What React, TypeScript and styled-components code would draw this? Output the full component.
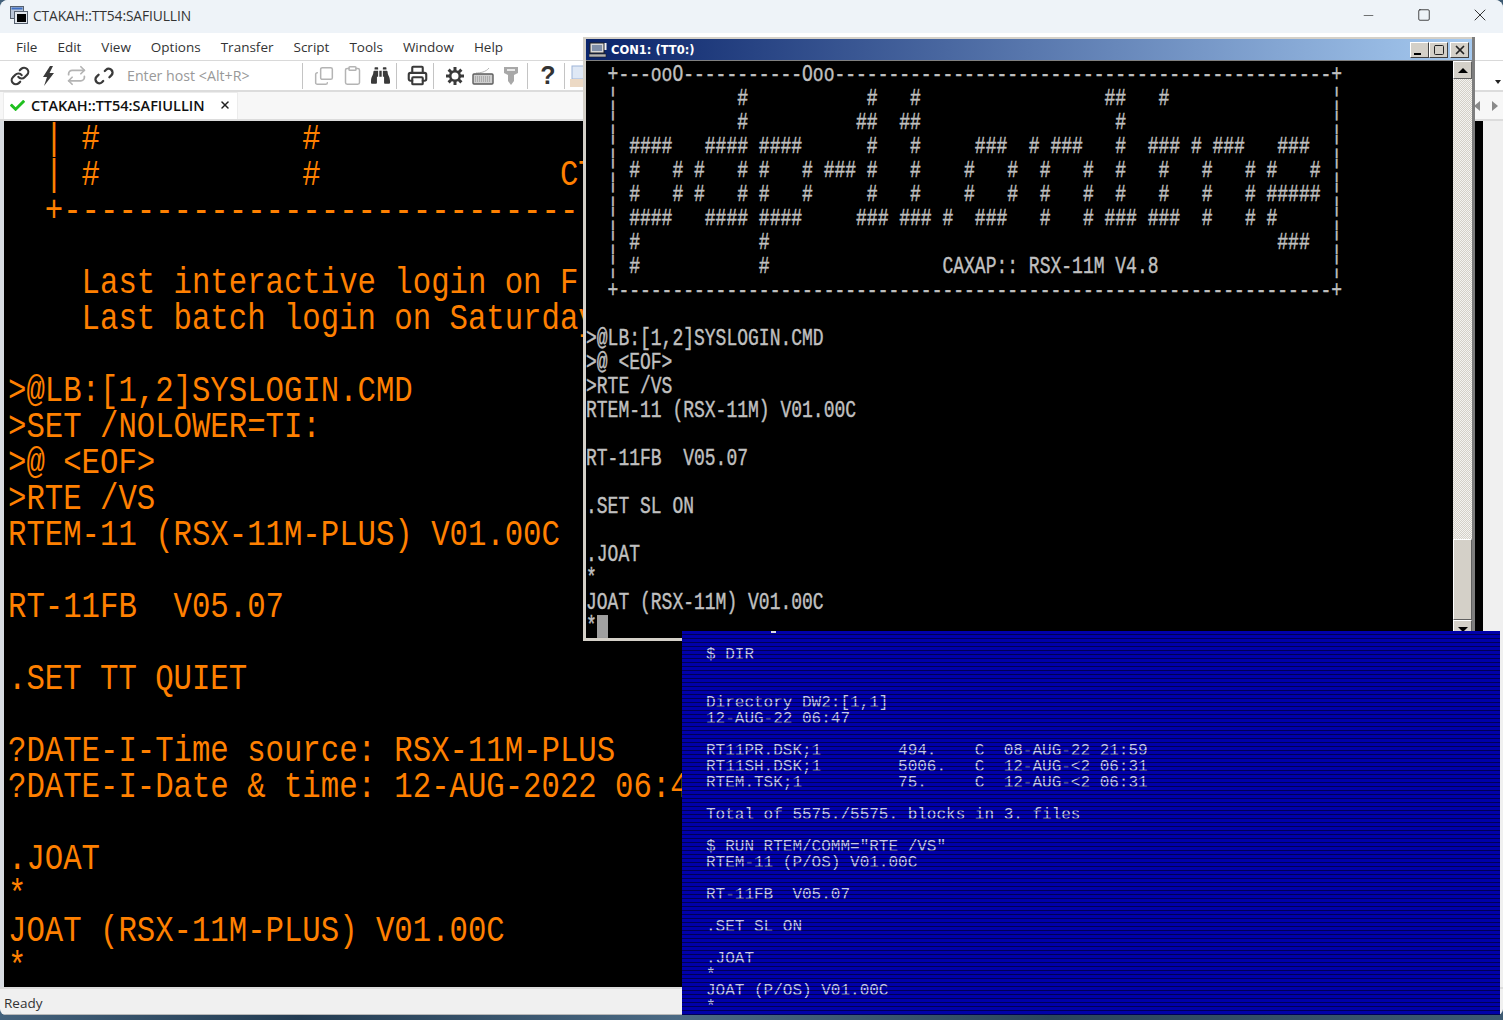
import React from 'react';
import styled, { createGlobalStyle } from 'styled-components';
import { Clipboard, Copy, Link, Minus, Printer, Repeat, Square, X } from 'lucide-react';
import { FaBinoculars, FaCheck } from 'react-icons/fa';

const MENU_ITEMS = ['File', 'Edit', 'View', 'Options', 'Transfer', 'Script', 'Tools', 'Window', 'Help'];

const MAIN_LINES = [
  '  | #           #',
  '  | #           #             CT',
  '  +' + '-'.repeat(28),
  '',
  '    Last interactive login on F',
  '    Last batch login on Saturday',
  '',
  '>@LB:[1,2]SYSLOGIN.CMD',
  '>SET /NOLOWER=TI:',
  '>@ <EOF>',
  '>RTE /VS',
  'RTEM-11 (RSX-11M-PLUS) V01.00C',
  '',
  'RT-11FB  V05.07',
  '',
  '.SET TT QUIET',
  '',
  '?DATE-I-Time source: RSX-11M-PLUS',
  '?DATE-I-Date & time: 12-AUG-2022 06:4',
  '',
  '.JOAT',
  '*',
  'JOAT (RSX-11M-PLUS) V01.00C',
  '*',
];

// banner is easier to keep straight by column than by counting spaces
const row = (...cells: [number, string][]) => {
  let line = '';
  for (const [col, text] of cells) line = line.padEnd(col) + text;
  return line;
};
const bar = (...cells: [number, string][]) => row([2, '¦'], ...cells, [69, '¦']);
const marks = (...cols: number[]) => cols.map((col): [number, string] => [col, '#']);

const CON_LINES = [
  row([2, '+---ooO'], [9, '-'.repeat(11)], [20, 'Ooo'], [23, '-'.repeat(46)], [69, '+']),
  bar(...marks(14, 26, 30, 48, 49, 53)),
  bar(...marks(14, 25, 26, 29, 30, 49)),
  bar([4, '####'], [11, '####'], [16, '####'], [26, '#'], [30, '#'], [36, '###'], [41, '#'], [43, '###'], [49, '#'], [52, '###'], [56, '#'], [58, '###'], [64, '###']),
  bar(...marks(4, 8, 10, 14, 16, 20), [22, '###'], ...marks(26, 30, 35, 39, 42, 46, 49, 53, 57, 61, 63, 67)),
  bar(...marks(4, 8, 10, 14, 16, 20, 26, 30, 35, 39, 42, 46, 49, 53, 57, 61), [63, '#####']),
  bar([4, '####'], [11, '####'], [16, '####'], [25, '###'], [29, '###'], [33, '#'], [36, '###'], [42, '#'], [46, '#'], [48, '###'], [52, '###'], [57, '#'], [61, '#'], [63, '#']),
  bar([4, '#'], [16, '#'], [64, '###']),
  bar([4, '#'], [16, '#'], [33, 'CAXAP:: RSX-11M V4.8']),
  row([2, '+' + '-'.repeat(66) + '+']),
  '',
  '>@LB:[1,2]SYSLOGIN.CMD',
  '>@ <EOF>',
  '>RTE /VS',
  'RTEM-11 (RSX-11M) V01.00C',
  '',
  'RT-11FB  V05.07',
  '',
  '.SET SL ON',
  '',
  '.JOAT',
  '*',
  'JOAT (RSX-11M) V01.00C',
];

const VT_LINES = [
  '$ DIR',
  '',
  '',
  'Directory DW2:[1,1]',
  '12-AUG-22 06:47',
  '',
  'RT11PR.DSK;1        494.    C  08-AUG-22 21:59',
  'RT11SH.DSK;1        5006.   C  12-AUG-<2 06:31',
  'RTEM.TSK;1          75.     C  12-AUG-<2 06:31',
  '',
  'Total of 5575./5575. blocks in 3. files',
  '',
  '$ RUN RTEM/COMM="RTE /VS"',
  'RTEM-11 (P/OS) V01.00C',
  '',
  'RT-11FB  V05.07',
  '',
  '.SET SL ON',
  '',
  '.JOAT',
  '*',
  'JOAT (P/OS) V01.00C',
  '*',
];

function App() {
  return (
    <Desktop>
      <GlobalStyle />
      <MainWindow>
        <TitleBar>
          <AppIcon viewBox="0 0 18 18">
            <rect x="0.5" y="0.5" width="13" height="12" fill="#b9c4d6" stroke="#56606e" />
            <rect x="1.5" y="1.5" width="11" height="2" fill="#3f6fc4" />
            <rect x="4.5" y="5.5" width="13" height="12" fill="#e2e6ec" stroke="#56606e" />
            <rect x="7" y="8" width="9" height="8" fill="#000" />
          </AppIcon>
          <TitleText>CTAKAH::TT54:SAFIULLIN</TitleText>
          <WindowControls>
            <WindowControl><Minus size={15} strokeWidth={1} /></WindowControl>
            <WindowControl><Square size={14} strokeWidth={1.4} /></WindowControl>
            <WindowControl><X size={20} strokeWidth={1.1} /></WindowControl>
          </WindowControls>
        </TitleBar>
        <MenuBar>
          {MENU_ITEMS.map((item) => (
            <MenuItem key={item}>{item}</MenuItem>
          ))}
        </MenuBar>
        <Toolbar>
          <ToolButton><Link size={20} strokeWidth={2.6} /></ToolButton>
          <ToolButton>
            <svg width="18" height="22" viewBox="0 0 18 22">
              <path d="M11 1 L4 12 H8 L5 21 L15 8 H10.5 L14 1 Z" fill="#3a3a3a" />
            </svg>
          </ToolButton>
          <ToolButton $muted><Repeat size={21} strokeWidth={2} /></ToolButton>
          <ToolButton>
            <svg width="20" height="20" viewBox="0 0 24 24" fill="none" stroke="currentColor" strokeWidth="2.8" strokeLinecap="round">
              <path d="M13 6 l1.5-1.5 a4.6 4.6 0 0 1 6.5 6.5 l-2.5 2.5" />
              <path d="M11 18 l-1.5 1.5 a4.6 4.6 0 0 1 -6.5 -6.5 l2.5 -2.5" />
            </svg>
          </ToolButton>
          <HostField>Enter host &lt;Alt+R&gt;</HostField>
          <ToolSeparator />
          <ToolGroup $lead={7}>
            <ToolButton $muted><FlippedCopy size={20} strokeWidth={1.8} /></ToolButton>
            <ToolButton $muted><Clipboard size={21} strokeWidth={1.7} /></ToolButton>
            <ToolButton><FaBinoculars size={19} /></ToolButton>
          </ToolGroup>
          <ToolSeparator />
          <ToolGroup $lead={6}>
            <ToolButton><Printer size={21} strokeWidth={2.4} /></ToolButton>
          </ToolGroup>
          <ToolSeparator />
          <ToolGroup $lead={7}>
            <ToolButton>
              <svg width="20" height="20" viewBox="0 0 20 20" fill="none" stroke="#3a3a3a">
                <circle cx="10" cy="10" r="4.8" strokeWidth="2.6" />
                <path d="M10 1 V5 M10 15 V19 M1 10 H5 M15 10 H19 M3.6 3.6 L6.5 6.5 M13.5 13.5 L16.4 16.4 M16.4 3.6 L13.5 6.5 M6.5 13.5 L3.6 16.4" strokeWidth="3" />
              </svg>
            </ToolButton>
            <ToolButton>
              <svg width="22" height="18" viewBox="0 0 22 18">
                <path d="M4 6 C8 6 14 5 17 1" fill="none" stroke="#b5b5b5" />
                <rect x="1" y="7" width="20" height="10" rx="1" fill="#cfcfcf" stroke="#5c5c5c" strokeWidth="1.4" />
                <path d="M3 10 H19 M3 12 H19 M3 14 H19" stroke="#8a8a8a" strokeDasharray="1 1" />
              </svg>
            </ToolButton>
            <ToolButton>
              <svg width="16" height="20" viewBox="0 0 16 20">
                <path d="M1 1 H15 V7 L11 9 V15 L8 19 L5 15 V9 L1 7 Z" fill="#a8a8a8" />
                <rect x="4" y="3" width="8" height="2" fill="#e8e8e8" />
              </svg>
            </ToolButton>
          </ToolGroup>
          <ToolSeparator />
          <ToolGroup $lead={6}>
            <HelpMark>?</HelpMark>
          </ToolGroup>
          <ToolSeparator />
          <ToolButton>
            <svg width="18" height="22" viewBox="0 0 18 22">
              <rect x="2" y="1" width="12" height="13" fill="#dfe8f5" stroke="#9db4d8" />
              <rect x="0" y="14" width="18" height="8" fill="#ecd9c4" />
            </svg>
          </ToolButton>
          <ToolbarCaret />
        </Toolbar>
        <TabBar>
          <ActiveTab>
            <FaCheck size={15} color="#1fc01f" />
            <TabLabel>CTAKAH::TT54:SAFIULLIN</TabLabel>
            <X size={12} strokeWidth={3} color="#222" />
          </ActiveTab>
          <TabArrows>
            <TabArrow $left />
            <TabArrow />
          </TabArrows>
        </TabBar>
        <SessionArea>
          <SessionScreen>
            {MAIN_LINES.map((line, i) => (
              <SessionLine key={i}>{line || ' '}</SessionLine>
            ))}
          </SessionScreen>
          <SessionScroll />
        </SessionArea>
        <StatusBar>Ready</StatusBar>
      </MainWindow>

      <ConWindow>
        <ConTitleBar>
          <svg width="18" height="16" viewBox="0 0 18 16">
            <rect x="1" y="1" width="14" height="10" fill="#d8d8d8" stroke="#202020" />
            <rect x="3" y="3" width="10" height="6" fill="#7f8fa8" />
            <rect x="0" y="12" width="17" height="3" fill="#b4b4b4" stroke="#202020" strokeWidth="0.6" />
            <rect x="15.5" y="1" width="2" height="7" fill="#f4f4f4" />
          </svg>
          <ConTitle>CON1: (TT0:)</ConTitle>
          <ConControls>
            <BevelButton><MinGlyph /></BevelButton>
            <BevelButton><Square size={12} strokeWidth={2} /></BevelButton>
            <BevelButton $spaced><X size={14} strokeWidth={3} /></BevelButton>
          </ConControls>
        </ConTitleBar>
        <ConBody>
          <ConScreen>
            {CON_LINES.map((line, i) => (
              <ConLine key={i}>{line || ' '}</ConLine>
            ))}
            <ConLine>*<ConCursor /></ConLine>
          </ConScreen>
          <ConScroll>
            <ScrollButton><ScrollArrow /></ScrollButton>
            <ScrollTrack>
              <ScrollThumb />
            </ScrollTrack>
            <ScrollButton><ScrollArrow $down /></ScrollButton>
          </ConScroll>
        </ConBody>
      </ConWindow>

      <VtWindow>
        <VtSpeck />
        {VT_LINES.map((line, i) => (
          <div key={i}>{line || ' '}</div>
        ))}
      </VtWindow>
    </Desktop>
  );
}

const GlobalStyle = createGlobalStyle`
  html, body {
    margin: 0;
    padding: 0;
    background: #2c475e;
  }
`;

const Desktop = styled.div`
  position: relative;
  width: 1503px;
  height: 1020px;
  overflow: hidden;
  background: linear-gradient(90deg, #44627c, #233c52 20%, #4b6a84 45%, #2b465c 70%, #3d5a72);
`;

const MainWindow = styled.div`
  display: flex;
  flex-direction: column;
  height: 1015px;
  background: #f0f0f0;
  border-radius: 8px 8px 6px 6px;
  overflow: hidden;
  font-family: 'Open Sans', 'Liberation Sans', sans-serif;
  color: #1b1b1b;
`;

const TitleBar = styled.div`
  display: flex;
  align-items: center;
  height: 33px;
  flex: none;
  box-sizing: border-box;
  padding: 0 0 3px 10px;
  background: #eef3f8;
`;

const AppIcon = styled.svg`
  width: 18px;
  height: 18px;
  margin-right: 5px;
`;

const TitleText = styled.span`
  font-size: 13.8px;
  letter-spacing: -0.1px;
  color: #333;
`;

const WindowControls = styled.div`
  display: flex;
  margin: 0 -5px 0 auto;
`;

const WindowControl = styled.div`
  display: flex;
  align-items: center;
  justify-content: center;
  width: 56px;
  height: 30px;
  color: #222;
`;

const MenuBar = styled.div`
  display: flex;
  align-items: center;
  gap: 20px;
  flex: none;
  height: 27px;
  padding-left: 16px;
  background: #fff;
  border-bottom: 1px solid #d9d9d9;
  font-size: 13.5px;
  color: #333;
`;

const MenuItem = styled.span``;

const Toolbar = styled.div`
  display: flex;
  align-items: center;
  flex: none;
  height: 29px;
  padding-left: 6px;
  background: #fff;
  border-bottom: 2px solid #dcdcdc;
`;

const ToolButton = styled.div<{ $muted?: boolean }>`
  display: flex;
  align-items: center;
  justify-content: center;
  width: 28px;
  height: 28px;
  flex: none;
  color: ${({ $muted }) => ($muted ? '#b4b4b4' : '#3a3a3a')};
`;

const FlippedCopy = styled(Copy)`
  transform: scaleY(-1);
`;

const HostField = styled.div`
  width: 184px;
  flex: none;
  padding-left: 9px;
  box-sizing: border-box;
  font-size: 14.2px;
  color: #999;
`;

const ToolSeparator = styled.div`
  width: 1px;
  height: 26px;
  flex: none;
  background: #c4c4c4;
`;

const ToolGroup = styled.div<{ $lead: number }>`
  display: flex;
  align-items: center;
  flex: none;
  padding: 0 2px 0 ${({ $lead }) => $lead}px;
`;

const HelpMark = styled.div`
  width: 28px;
  text-align: center;
  font-family: 'Liberation Sans', sans-serif;
  font-size: 25px;
  font-weight: 700;
  color: #333;
`;

const ToolbarCaret = styled.div`
  align-self: flex-end;
  margin: 0 2px 6px auto;
  border-left: 3px solid transparent;
  border-right: 3px solid transparent;
  border-top: 4px solid #222;
`;

const TabBar = styled.div`
  display: flex;
  align-items: flex-end;
  justify-content: space-between;
  flex: none;
  height: 27px;
  padding-left: 3px;
  background: #f7f7f7;
  border-bottom: 2px solid #dcdcdc;
`;

const ActiveTab = styled.div`
  display: flex;
  align-items: center;
  width: 235px;
  height: 27px;
  box-sizing: border-box;
  padding: 0 0 2px 6px;
  background: #fff;
  border: 1px solid #ececec;
  border-bottom: none;
`;

const TabLabel = styled.span`
  width: 188px;
  margin-left: 6px;
  font-size: 14.5px;
  font-weight: 600;
  color: #111;
`;

const TabArrows = styled.div`
  display: flex;
  align-items: center;
  gap: 12px;
  height: 27px;
  padding-right: 5px;
`;

const TabArrow = styled.div<{ $left?: boolean }>`
  width: 0;
  height: 0;
  border-top: 5px solid transparent;
  border-bottom: 5px solid transparent;
  border-left: ${({ $left }) => ($left ? 'none' : '6px solid #8a8a8a')};
  border-right: ${({ $left }) => ($left ? '6px solid #8a8a8a' : 'none')};
`;

const SessionArea = styled.div`
  display: flex;
  flex: 1;
  min-height: 0;
  padding-left: 4px;
  background: #d9dde2;
  border-bottom: 2px solid #dcdcdc;
`;

const SessionScreen = styled.div`
  flex: 1;
  min-width: 0;
  padding: 3px 0 0 4px;
  overflow: hidden;
  background: #000;
  font-family: 'Liberation Mono', monospace;
  font-size: 30.67px;
  color: #ff8000;
  white-space: pre;
`;

/* the reference font is a tall narrow terminal face, stretch the mono to it */
const SessionLine = styled.div`
  height: 29px;
  margin-bottom: 7px;
  line-height: 29px;
  transform: scaleY(1.2);
`;

const SessionScroll = styled.div`
  width: 20px;
  flex: none;
  background: #f0f0f0;
`;

const StatusBar = styled.div`
  display: flex;
  align-items: center;
  flex: none;
  height: 26px;
  box-sizing: border-box;
  padding: 3px 0 0 4px;
  border-bottom: 1px solid #b8b8b8;
  font-size: 13.5px;
  color: #333;
`;

const ConWindow = styled.div`
  position: absolute;
  left: 583px;
  top: 37px;
  display: flex;
  flex-direction: column;
  width: 892px;
  height: 604px;
  box-sizing: border-box;
  padding-top: 2px;
  background: #d4d0c8;
  border-left: 3px solid #d4d0c8;
  border-right: 3px solid #7e7e7e;
  border-bottom: 3px solid #d4d0c8;
`;

const ConTitleBar = styled.div`
  display: flex;
  align-items: center;
  flex: none;
  height: 22px;
  padding: 0 3px;
  background: linear-gradient(90deg, #0a246a, #a6caf0);
  border-bottom: 1px solid #808080;
  box-sizing: border-box;
`;

const ConTitle = styled.span`
  margin-left: 4px;
  font-family: 'DejaVu Sans', sans-serif;
  font-size: 11.5px;
  font-weight: 700;
  color: #fff;
`;

const ConControls = styled.div`
  display: flex;
  margin-left: auto;
`;

const BevelButton = styled.div<{ $spaced?: boolean }>`
  display: flex;
  align-items: center;
  justify-content: center;
  width: 19px;
  height: 16px;
  margin-left: ${({ $spaced }) => ($spaced ? '2px' : '0')};
  box-sizing: border-box;
  background: #d4d0c8;
  border: 1px solid;
  border-color: #fff #404040 #404040 #fff;
  color: #222;
`;

const MinGlyph = styled.div`
  width: 7px;
  height: 2px;
  margin: 8px 4px 0 0;
  background: #000;
`;

const ConBody = styled.div`
  display: flex;
  flex: 1;
  min-height: 0;
`;

const ConScreen = styled.div`
  flex: 1;
  min-width: 0;
  padding-top: 5px;
  overflow: hidden;
  background: #000;
  font-family: 'Liberation Mono', monospace;
  font-size: 18px;
  color: #c0c0c0;
  white-space: pre;
  -webkit-text-stroke: 0.3px #c0c0c0;
`;

const ConLine = styled.div`
  height: 17px;
  margin-bottom: 7px;
  line-height: 17px;
  transform: scaleY(1.35);
`;

const ConCursor = styled.span`
  display: inline-block;
  width: 11px;
  height: 17px;
  vertical-align: top;
  background: #a0a0a0;
`;

const ConScroll = styled.div`
  display: flex;
  flex-direction: column;
  width: 19px;
  flex: none;
`;

const ScrollButton = styled.div`
  display: flex;
  align-items: center;
  justify-content: center;
  height: 18px;
  flex: none;
  box-sizing: border-box;
  background: #d4d0c8;
  border: 1px solid;
  border-color: #fff #606060 #606060 #fff;
`;

const ScrollArrow = styled.div<{ $down?: boolean }>`
  width: 0;
  height: 0;
  border-left: 5px solid transparent;
  border-right: 5px solid transparent;
  border-bottom: ${({ $down }) => ($down ? 'none' : '5px solid #000')};
  border-top: ${({ $down }) => ($down ? '5px solid #000' : 'none')};
`;

const ScrollTrack = styled.div`
  display: flex;
  flex: 1;
  flex-direction: column;
  justify-content: flex-end;
  background: repeating-conic-gradient(#d4d0c8 0 25%, #f4f3f0 0 50%) 0 0 / 2px 2px;
`;

const ScrollThumb = styled.div`
  height: 81px;
  box-sizing: border-box;
  background: #d4d0c8;
  border: 1px solid;
  border-color: #fff #606060 #606060 #fff;
`;

const VtWindow = styled.div`
  position: absolute;
  left: 682px;
  top: 631px;
  width: 818px;
  height: 384px;
  box-sizing: border-box;
  padding: 16px 0 0 24px;
  overflow: hidden;
  background: #0000aa;
  font-family: 'Liberation Mono', monospace;
  font-size: 16px;
  line-height: 16px;
  color: #c4c8e8;
  white-space: pre;

  &::after {
    content: '';
    position: absolute;
    inset: 0;
    background: repeating-linear-gradient(180deg, transparent 0 3px, rgba(0, 0, 40, 0.65) 3px 4px);
  }
`;

const VtSpeck = styled.span`
  position: absolute;
  left: 89px;
  top: 0;
  width: 5px;
  height: 2px;
  background: #d8d8e8;
`;

export default App;
